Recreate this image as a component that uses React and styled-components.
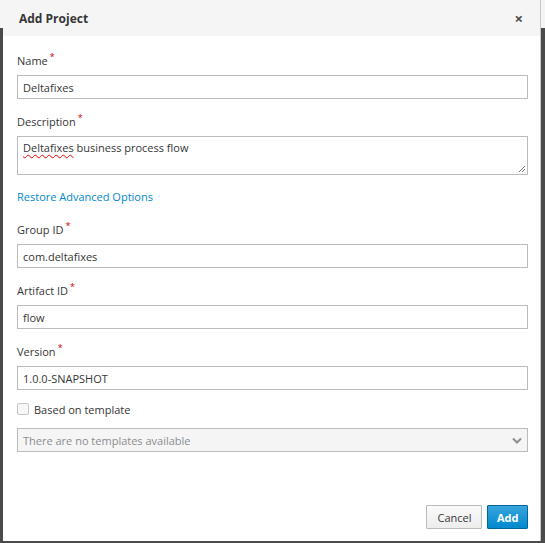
import React from 'react';
import styled, { createGlobalStyle } from 'styled-components';

const GlobalStyle = createGlobalStyle`
  html, body {
    margin: 0;
    padding: 0;
  }
  body {
    font-family: "Open Sans", "Liberation Sans", sans-serif;
    background: linear-gradient(#f5f5f5 0 28px, #4b4b4b 28px);
    height: 543px;
    overflow: hidden;
  }
`;

const Dialog = styled.div`
  margin-left: 3px;
  width: 538px;
  height: 541px;
  box-sizing: border-box;
  background: #fff;
  border-right: 1px solid #c8c8c8;
  display: flex;
  flex-direction: column;
`;

const Header = styled.div`
  height: 36px;
  flex-shrink: 0;
  background: #f5f5f5;
  display: flex;
  align-items: center;
  padding: 0 16px;
  .title {
    font-size: 12px;
    font-weight: 700;
    color: #363636;
  }
  .close {
    margin-left: auto;
    font-size: 15px;
    color: #4d4d4d;
    font-weight: 700;
    margin-right: 1px;
    line-height: 1;
  }
`;

const Body = styled.div`
  flex: 1;
  padding: 15px 12px 0 14px;
`;

const Group = styled.div`
  margin-bottom: ${p => p.$gap ?? 13}px;
`;

const Label = styled.div`
  font-size: 11px;
  line-height: 20px;
  color: #363636;
  margin-bottom: 4px;
  sup {
    color: #c00;
    font-size: 9px;
    margin-left: 2px;
    vertical-align: 5px;
    line-height: 0;
  }
`;

const Input = styled.div`
  height: 24px;
  box-sizing: border-box;
  border: 1px solid #bbb;
  padding: 0 5px;
  display: flex;
  align-items: center;
  font-size: 11px;
  color: #363636;
  background: ${p => (p.$disabled ? '#f5f5f5' : '#fff')};
  ${p => p.$disabled && 'color: #8b8d8f;'}
`;

const TextArea = styled.div`
  position: relative;
  height: 39px;
  box-sizing: border-box;
  border: 1px solid #bbb;
  padding: 3px 5px;
  font-size: 11px;
  color: #363636;
  .spell {
    text-decoration: underline wavy #e00;
    text-decoration-thickness: 1px;
    text-underline-offset: 2px;
  }
  svg {
    position: absolute;
    right: 1px;
    bottom: 1px;
  }
`;

const LinkText = styled.a`
  display: block;
  font-size: 11px;
  line-height: 20px;
  color: #0088ce;
  text-decoration: none;
  margin: 0 0 13px;
`;

const CheckRow = styled.label`
  display: flex;
  align-items: center;
  gap: 5px;
  font-size: 11px;
  color: #363636;
  height: 20px;
  margin: 9px 0 9px;
  .box {
    width: 10px;
    height: 10px;
    border: 1px solid #c6c6c6;
    border-radius: 2px;
    background: #f7f7f7;
  }
`;

const Chevron = styled.span`
  margin-left: auto;
  display: flex;
`;

const Footer = styled.div`
  display: flex;
  justify-content: flex-end;
  gap: 5px;
  padding: 0 12px 12px 0;
`;

const Button = styled.button`
  height: 24px;
  box-sizing: border-box;
  font-family: inherit;
  font-size: 11px;
  padding: 0 ${p => (p.$primary ? 8.5 : 10)}px;
  border: 1px solid ${p => (p.$primary ? '#00659c' : '#bbb')};
  background: ${p =>
    p.$primary
      ? 'linear-gradient(#39a5dc, #0088ce)'
      : 'linear-gradient(#fafafa, #ededed)'};
  color: ${p => (p.$primary ? '#fff' : '#363636')};
  font-weight: ${p => (p.$primary ? 700 : 400)};
  border-radius: 1px;
`;

const Field = ({ label, children, gap }) => (
  <Group $gap={gap}>
    <Label>
      {label}
      <sup>*</sup>
    </Label>
    {children}
  </Group>
);

export default function App() {
  return (
    <>
      <GlobalStyle />
      <Dialog>
        <Header>
          <span className="title">Add Project</span>
          <span className="close">×</span>
        </Header>
        <Body>
          <Field label="Name">
            <Input>Deltafixes</Input>
          </Field>
          <Field label="Description" gap={12}>
            <TextArea>
              <span className="spell">Deltafixes</span> business process flow
              <svg width="9" height="9" viewBox="0 0 9 9">
                <path d="M8 2 L2 8 M8 5 L5 8" stroke="#777" strokeWidth="1" />
              </svg>
            </TextArea>
          </Field>
          <LinkText>Restore Advanced Options</LinkText>
          <Field label="Group ID">
            <Input>com.deltafixes</Input>
          </Field>
          <Field label="Artifact ID">
            <Input>flow</Input>
          </Field>
          <Field label="Version" gap={0}>
            <Input>1.0.0-SNAPSHOT</Input>
          </Field>
          <CheckRow>
            <span className="box" />
            Based on template
          </CheckRow>
          <Input $disabled>
            There are no templates available
            <Chevron>
              <svg width="10" height="7" viewBox="0 0 10 7">
                <path d="M1 1.5 L5 5.5 L9 1.5" stroke="#8b8d8f" strokeWidth="2" fill="none" />
              </svg>
            </Chevron>
          </Input>
        </Body>
        <Footer>
          <Button>Cancel</Button>
          <Button $primary>Add</Button>
        </Footer>
      </Dialog>
    </>
  );
}
